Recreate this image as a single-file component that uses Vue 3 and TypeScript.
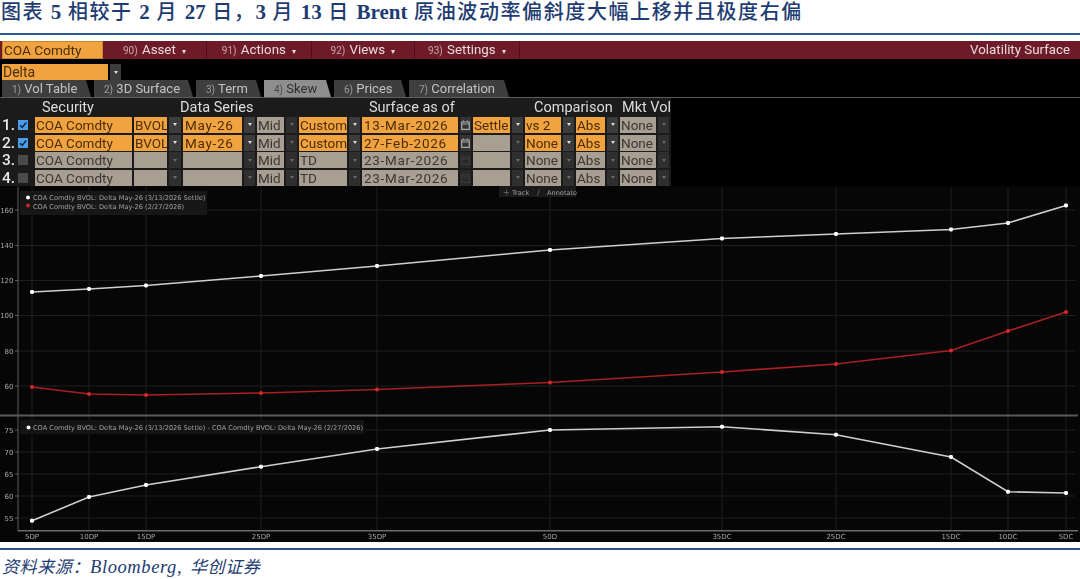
<script setup lang="ts">
type Cell = { t: string; k: 'on' | 'off' | 'arrOn' | 'arrOff' | 'calOn' | 'calOff' }
const on = (t: string): Cell => ({ t, k: 'on' })
const off = (t: string): Cell => ({ t, k: 'off' })
const aOn: Cell = { t: '', k: 'arrOn' }
const aOff: Cell = { t: '', k: 'arrOff' }
const rows: { n: string; checked: boolean; cells: Cell[] }[] = [
  { n: '1.', checked: true, cells: [on('COA Comdty'), on('BVOL'), aOn, on('May-26'), aOn, off('Mid'), aOff, on('Custom'), aOn, on('13-Mar-2026'), { t: '', k: 'calOn' }, on('Settle'), aOn, on('vs 2'), aOn, on('Abs'), aOn, off('None'), aOff] },
  { n: '2.', checked: true, cells: [on('COA Comdty'), on('BVOL'), aOn, on('May-26'), aOn, off('Mid'), aOff, on('Custom'), aOn, on('27-Feb-2026'), { t: '', k: 'calOn' }, off(''), aOff, on('None'), aOn, on('Abs'), aOn, off('None'), aOff] },
  { n: '3.', checked: false, cells: [off('COA Comdty'), off(''), aOff, off(''), aOff, off('Mid'), aOff, off('TD'), aOff, off('23-Mar-2026'), { t: '', k: 'calOff' }, off(''), aOff, off('None'), aOff, off('Abs'), aOff, off('None'), aOff] },
  { n: '4.', checked: false, cells: [off('COA Comdty'), off(''), aOff, off(''), aOff, off('Mid'), aOff, off('TD'), aOff, off('23-Mar-2026'), { t: '', k: 'calOff' }, off(''), aOff, off('None'), aOff, off('Abs'), aOff, off('None'), aOff] },
]
const menus = [
  { c: '90)', t: 'Asset', w: 104 },
  { c: '91)', t: 'Actions', w: 105 },
  { c: '92)', t: 'Views', w: 103 },
  { c: '93)', t: 'Settings', w: 105 },
]
const tabs = [
  { c: '1)', t: 'Vol Table', w: 89 },
  { c: '2)', t: '3D Surface', w: 99 },
  { c: '3)', t: 'Term', w: 65 },
  { c: '4)', t: 'Skew', w: 67, active: true },
  { c: '6)', t: 'Prices', w: 72 },
  { c: '7)', t: 'Correlation', w: 100 },
]
const xs = [32, 89, 146, 261, 377, 550, 722, 836, 951, 1008, 1066]
const labels = ['5DP', '10DP', '15DP', '25DP', '35DP', '50D', '35DC', '25DC', '15DC', '10DC', '5DC']
const white = [293, 290, 286.5, 277, 267, 251, 239.5, 235, 230.5, 224, 206.5]
const red = [388, 395, 396, 394, 390.5, 383.5, 373, 365, 351.5, 332, 313]
const diff = [521.7, 498, 486, 467.7, 450, 431, 427.7, 435.7, 458, 492.7, 494]
const pts = (ys: number[]) => ys.map((y, i) => `${xs[i]},${y}`).join(' ')
const topTicks = [{ v: 160, y: 211 }, { v: 140, y: 246.5 }, { v: 120, y: 281.5 }, { v: 100, y: 316.5 }, { v: 80, y: 352 }, { v: 60, y: 387 }]
const botTicks = [{ v: 75, y: 431 }, { v: 70, y: 453 }, { v: 65, y: 475 }, { v: 60, y: 497 }, { v: 55, y: 519 }]
const hasDigit = (t: string) => /\d-/.test(t) || /-\d/.test(t)
</script>

<template>
  <div class="page">
    <h1 class="title">图表 <b>5</b> 相较于 <b>2</b> 月 <b>27</b> 日，<b>3</b> 月 <b>13</b> 日 <b>Brent</b> 原油波动率偏斜度大幅上移并且极度右偏</h1>
    <div class="rule"></div>
    <div class="terminal">
      <div class="menubar">
        <div class="ticker">COA Comdty</div>
        <div v-for="m in menus" :key="m.c" class="menu" :style="{ width: m.w + 'px' }"><small>{{ m.c }}</small> {{ m.t }} <i>▾</i></div>
        <div class="surface">Volatility Surface</div>
      </div>
      <div class="deltarow">
        <div class="delta">Delta</div>
        <div class="darr"><span class="tri"></span></div>
      </div>
      <div class="tabs">
        <div v-for="t in tabs" :key="t.c" class="tab" :class="{ active: t.active }" :style="{ width: t.w + 'px' }"><small>{{ t.c }}</small> {{ t.t }}</div>
      </div>
      <div class="tablewrap">
        <div class="grid">
          <div class="h h-sec">Security</div>
          <div class="h h-data">Data Series</div>
          <div class="h h-surf">Surface as of</div>
          <div class="h h-comp">Comparison</div>
          <div class="h h-mkt">Mkt Vol</div>
          <template v-for="r in rows" :key="r.n">
            <div class="num">{{ r.n }}</div>
            <div class="chk"><span class="box" :class="{ checked: r.checked }"><svg v-if="r.checked" width="10" height="10" viewBox="0 0 10 10"><path d="M2 5.2 4.2 7.4 8.2 2.6" fill="none" stroke="#14264a" stroke-width="1.6" /></svg></span></div>
            <div v-for="(c, i) in r.cells" :key="i" class="cell" :class="[c.k, { wide: hasDigit(c.t) }]">
              {{ c.t }}
              <span v-if="c.k === 'arrOn' || c.k === 'arrOff'" class="tri"></span>
              <svg v-if="c.k === 'calOn' || c.k === 'calOff'" width="9" height="10" viewBox="0 0 9 10"><path d="M.7 2h7.6v7.3H.7zM.7 4h7.6M2.5.5v2M6.5.5v2" fill="none" stroke="currentColor" stroke-width="1.2" /></svg>
            </div>
          </template>
        </div>
      </div>
      <svg class="chart" width="1080" height="356" viewBox="0 187 1080 356">
        <rect x="0" y="187" width="1080" height="356" fill="#060606" />
        <line v-for="x in xs" :key="x" :x1="x" :x2="x" y1="188" y2="531" class="gridline" />
        <line v-for="t in topTicks" :key="t.v" x1="18" x2="1075" :y1="t.y" :y2="t.y" class="gridline" />
        <line v-for="t in botTicks" :key="t.v" x1="18" x2="1075" :y1="t.y" :y2="t.y" class="gridline" />
        <line x1="18" x2="18" y1="188" y2="532" class="axis" />
        <line v-for="t in topTicks" :key="'m' + t.v" x1="15" x2="18" :y1="t.y" :y2="t.y" class="axis" />
        <line v-for="t in botTicks" :key="'m' + t.v" x1="15" x2="18" :y1="t.y" :y2="t.y" class="axis" />
        <line x1="18" x2="1078" y1="531.7" y2="531.7" stroke="#6b6b6b" stroke-width="1.5" />
        <line x1="0" x2="1078" y1="416.5" y2="416.5" stroke="#5a5a5a" stroke-width="2" />
        <text v-for="t in topTicks" :key="t.v" x="13.5" :y="t.y + 2.5" text-anchor="end" class="tick">{{ t.v }}</text>
        <text v-for="t in botTicks" :key="t.v" x="13.5" :y="t.y + 2.5" text-anchor="end" class="tick">{{ t.v }}</text>
        <text v-for="(l, i) in labels" :key="l" :x="xs[i]" y="540" text-anchor="middle" class="tick">{{ l }}</text>

        <rect x="20" y="192" width="187" height="24" fill="#171717" />
        <circle cx="28" cy="198.5" r="2" fill="#fff" />
        <circle cx="28" cy="206.5" r="2" fill="#d02020" />
        <text x="33" y="201" class="legend">COA Comdty BVOL: Delta May-26 (3/13/2026 Settle)</text>
        <text x="33" y="209.5" class="legend">COA Comdty BVOL: Delta May-26 (2/27/2026)</text>

        <rect x="499" y="187" width="77" height="11" fill="#1a1a1a" />
        <text x="503" y="196" class="tool">+</text>
        <text x="512" y="195.5" class="legend">Track</text>
        <text x="537" y="196" class="tool">∕</text>
        <text x="547" y="195.5" class="legend">Annotate</text>

        <rect x="20" y="421" width="344" height="14" fill="#141414" />
        <circle cx="28.5" cy="428.5" r="2" fill="#fff" />
        <text x="33" y="431" class="legend">COA Comdty BVOL: Delta May-26 (3/13/2026 Settle) - COA Comdty BVOL: Delta May-26 (2/27/2026)</text>

        <polyline :points="pts(white)" fill="none" stroke="#cfcfcf" stroke-width="1.6" />
        <rect v-for="(y, i) in white" :key="i" :x="xs[i] - 2" :y="y - 2" width="4" height="4" rx="1.4" fill="#fff" />
        <polyline :points="pts(red)" fill="none" stroke="#a81f24" stroke-width="1.6" />
        <circle v-for="(y, i) in red" :key="i" :cx="xs[i]" :cy="y" r="2" fill="#d8282a" />
        <polyline :points="pts(diff)" fill="none" stroke="#cfcfcf" stroke-width="1.6" />
        <rect v-for="(y, i) in diff" :key="i" :x="xs[i] - 2" :y="y - 2" width="4" height="4" rx="1.4" fill="#fff" />
      </svg>
    </div>
    <div class="rule bottom"></div>
    <p class="source">资料来源：<span>Bloomberg,</span> 华创证券</p>
  </div>
</template>

<style scoped>
.page {
  width: 1080px;
  height: 579px;
  background: #fff;
  overflow: hidden;
  display: flex;
  flex-direction: column;
}
.title {
  margin: 0;
  height: 34px;
  padding-left: 1px;
  font: 500 20px/24px "Liberation Serif", "Noto Sans CJK SC", serif;
  letter-spacing: 1.6px;
  color: #1e3c72;
  white-space: nowrap;
}
.title b {
  font-size: 21px;
  font-weight: 700;
  letter-spacing: 0;
}
.rule {
  height: 2px;
  flex: none;
  background: #2f5a94;
}
.rule.bottom {
  margin-top: 6px;
  background: #2d5088;
}
.terminal {
  margin-top: 6px;
  height: 501px;
  flex: none;
  background: #000;
  display: flex;
  flex-direction: column;
  font-family: Roboto, sans-serif;
  filter: blur(0.35px);
}
.menubar {
  height: 18px;
  flex: none;
  display: flex;
  background: #6e1a28;
  color: #e6dcdc;
  font-size: 13.3px;
  line-height: 18px;
}
.ticker {
  width: 101px;
  margin-left: 2px;
  padding-left: 1px;
  background: #f0a33e;
  color: #4a2c08;
  font-size: 13.6px;
  border: 1px solid #c9842e;
  box-sizing: border-box;
  line-height: 16px;
}
.menu {
  text-align: center;
  border-right: 1px solid #4e0f1b;
  box-sizing: border-box;
  white-space: nowrap;
}
.menu small,
.tab small {
  font-size: 10px;
  opacity: 0.7;
}
.menu small {
  margin-right: 1px;
}
.menu i {
  font-style: normal;
  font-size: 8px;
  margin-left: 3px;
}
.surface {
  margin-left: auto;
  padding-right: 10px;
}
.deltarow {
  margin-top: 5px;
  height: 16px;
  flex: none;
  display: flex;
  padding-left: 2px;
  gap: 2px;
}
.delta {
  width: 106px;
  background: #f0a33e;
  color: #4a2c08;
  font: 14px/17px Roboto, sans-serif;
  padding-left: 1px;
  box-sizing: border-box;
}
.darr {
  width: 11px;
  background: #3c3c3c;
  display: flex;
  align-items: center;
  justify-content: center;
}
.tri {
  display: block;
  width: 0;
  height: 0;
  border-left: 2.5px solid transparent;
  border-right: 2.5px solid transparent;
  border-top: 3px solid #ddd;
}
.tabs {
  height: 17px;
  flex: none;
  display: flex;
  gap: 3px;
  padding-left: 2px;
  border-bottom: 1px solid #5d5d5d;
}
.tab {
  flex: none;
  background: #3e3e3e;
  color: #c2c2c2;
  font: 13px/18px Roboto, sans-serif;
  padding-left: 10px;
  box-sizing: border-box;
  white-space: nowrap;
  clip-path: polygon(0 0, calc(100% - 5px) 0, 100% 100%, 0 100%);
}
.tab.active {
  background: #8e8e8e;
  color: #2e2e2e;
}
.tablewrap {
  width: 671px;
  height: 88px;
  flex: none;
  background: #1b1b1b;
  overflow: hidden;
}
.grid {
  display: grid;
  margin-left: 2px;
  grid-template-columns: 14px 15px 97px 33px 12px 59px 11px 27px 11px 48px 11px 96px 11px 37px 11px 36px 11px 29px 11px 36px 11px;
  grid-template-rows: 17.4px repeat(4, 16px);
  column-gap: 2px;
  row-gap: 1.6px;
  align-items: stretch;
}
.h {
  color: #dedede;
  font: 14.5px/20px Roboto, sans-serif;
  white-space: nowrap;
}
.h-sec {
  grid-column: 1 / 4;
  padding-left: 40px;
}
.h-data {
  grid-column: 4 / 11;
  padding-left: 46px;
}
.h-surf {
  grid-column: 12 / 15;
  padding-left: 7px;
}
.h-comp {
  grid-column: 16 / 19;
  padding-left: 9px;
}
.h-mkt {
  grid-column: 20 / 22;
  padding-left: 2px;
}
.num {
  color: #e8e8e8;
  font: 500 15.5px/17px Roboto, sans-serif;
  text-align: right;
  padding-right: 1px;
}
.chk {
  display: flex;
  align-items: center;
}
.box {
  width: 10px;
  height: 10px;
  background: #4a4a4a;
  display: block;
}
.box.checked {
  background: #4a9ee8;
}
.box svg {
  display: block;
}
.cell {
  font: 13.5px/17px Roboto, sans-serif;
  overflow: hidden;
  white-space: nowrap;
  padding-left: 1px;
}
.cell.wide {
  letter-spacing: 0.7px;
  padding-left: 2px;
}
.cell.on {
  background: #f0a33e;
  color: #4a2c08;
}
.cell.off {
  background: #a89f92;
  color: #3b3733;
}
.cell.arrOn,
.cell.arrOff,
.cell.calOn,
.cell.calOff {
  display: flex;
  align-items: center;
  justify-content: center;
  padding: 0;
}
.cell.arrOn {
  background: #3c3c3c;
}
.cell.arrOff {
  background: #2f2f2f;
}
.cell.arrOff .tri {
  border-top-color: #6a6a6a;
}
.cell.calOn {
  background: #343434;
  color: #aaa;
}
.cell.calOff {
  background: #282828;
  color: #3a3a3a;
}
.chart {
  display: block;
  flex: none;
}
.gridline {
  stroke: #1e1e1e;
  stroke-width: 1;
}
.axis {
  stroke: #5c5c5c;
  stroke-width: 1;
}
.tick {
  font: 7px "DejaVu Sans", sans-serif;
  fill: #a8a8a8;
}
.legend {
  font: 6.6px "DejaVu Sans", sans-serif;
  fill: #a0a0a0;
}
.tool {
  font: 8px "DejaVu Sans", sans-serif;
  fill: #6e6e6e;
}
.source {
  margin: 0;
  padding: 6px 0 0 2px;
  font: italic 17px/22px "Liberation Serif", "Noto Sans CJK SC", serif;
  letter-spacing: 0.6px;
  color: #1e3c72;
  white-space: nowrap;
}
.source span {
  font-size: 18.5px;
  margin-right: 3px;
}
</style>
